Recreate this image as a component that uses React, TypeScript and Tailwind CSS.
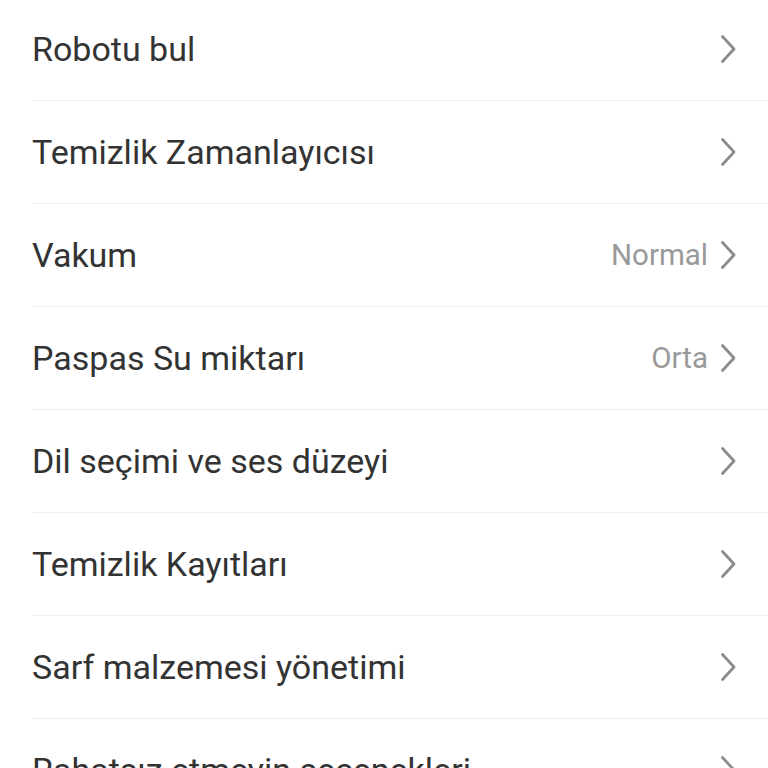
const items: { label: string; value?: string }[] = [
  { label: 'Robotu bul' },
  { label: 'Temizlik Zamanlayıcısı' },
  { label: 'Vakum', value: 'Normal' },
  { label: 'Paspas Su miktarı', value: 'Orta' },
  { label: 'Dil seçimi ve ses düzeyi' },
  { label: 'Temizlik Kayıtları' },
  { label: 'Sarf malzemesi yönetimi' },
  { label: 'Rahatsız etmeyin seçenekleri' },
];

function Chevron() {
  return (
    <svg width="16" height="30" viewBox="0 0 16 30" fill="none" className="ml-3 shrink-0">
      <path d="M2.5 2.5 L14 15 L2.5 27.5" stroke="#8c8c8c" strokeWidth="2.8" strokeLinecap="round" strokeLinejoin="round" />
    </svg>
  );
}

export default function App() {
  return (
    <div className="w-[768px] h-[768px] overflow-hidden bg-white font-['Roboto','Noto_Sans',sans-serif]">
      <div className="-mt-[2px]">
        {items.map((item) => (
          <div key={item.label} className="ml-8 h-[103px] border-b border-[#eeeeee] flex items-center justify-between pr-8">
            <span className="text-[34px] text-[#333333] whitespace-nowrap">{item.label}</span>
            <div className="flex items-center">
              {item.value && <span className="text-[29.5px] text-[#999999]">{item.value}</span>}
              <Chevron />
            </div>
          </div>
        ))}
      </div>
    </div>
  );
}
